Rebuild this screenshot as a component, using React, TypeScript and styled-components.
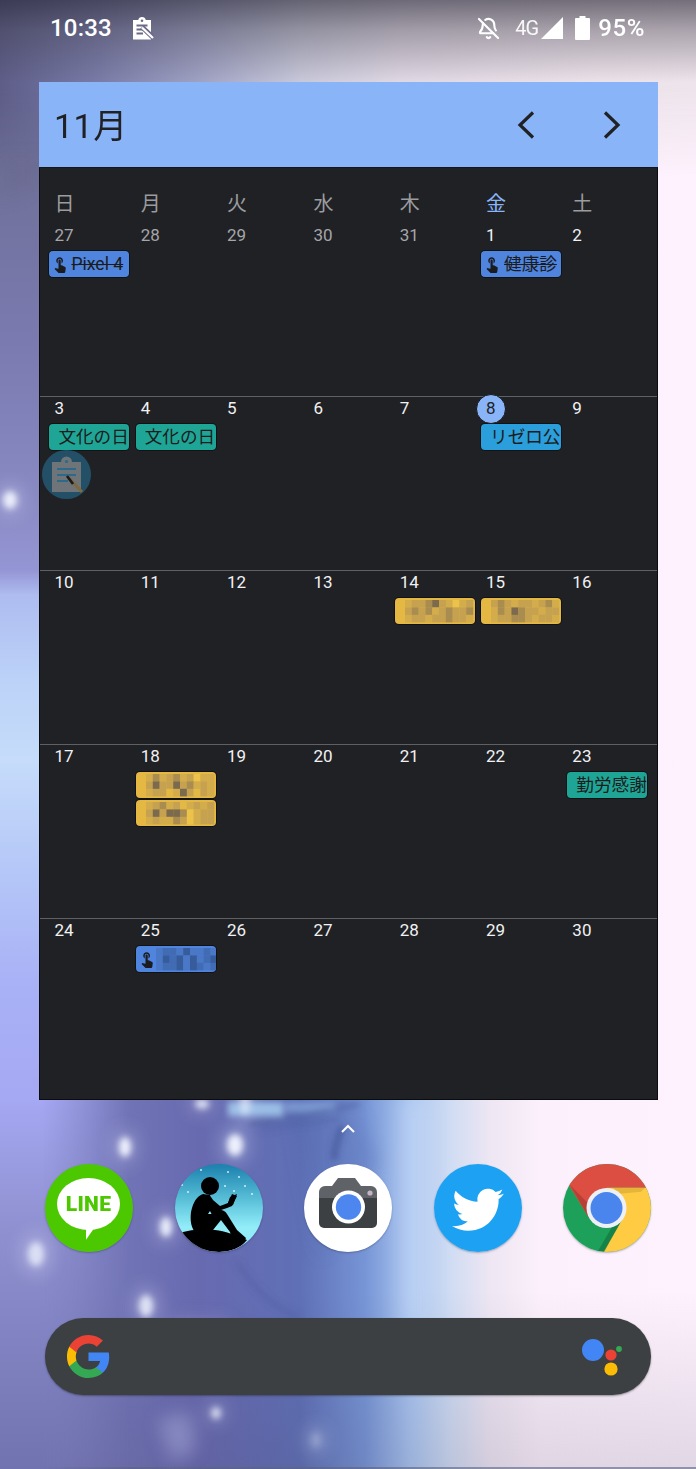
import React from "react";
import styled, { createGlobalStyle } from "styled-components";
import { BellOff } from "lucide-react";

const Global = createGlobalStyle`
  html, body { margin: 0; padding: 0; background: #000; }
  #root { width: 696px; height: 1469px; }
`;

const Screen = styled.div`
  position: relative;
  isolation: isolate;
  width: 696px;
  height: 1469px;
  overflow: hidden;
  display: flex;
  flex-direction: column;
  font-family: Roboto, "Noto Sans CJK JP", sans-serif;
  background:
    linear-gradient(180deg, rgba(0,0,0,0) 1290px, rgba(60,50,80,.14) 1469px),
    linear-gradient(90deg, #8a8bc8 0, #7477b8 100px, #686ab0 200px, #5f70b6 300px, #7795d6 365px, #a9c5f0 410px, #cfdcf3 450px, #eee6f3 490px, #fbf0fb 540px, #fdf2fd 696px);
  box-shadow: inset 1px 1px 0 rgba(40,40,55,.85), inset 0 -2px 0 rgba(90,100,130,.6);
  &::before {
    content: "";
    position: absolute;
    inset: 0;
    z-index: -3;
    background: linear-gradient(180deg, #5c5d88 0, #6f7098 160px, #7a7ab0 340px, #8a8ac4 500px, #9495d4 570px, #aebcf0 595px, #bcd2f8 680px, #c6dcfa 760px, #b6c9f8 860px, #a9b2f6 980px, #a5a8f2 1100px, #8f90d0 1230px, #7173b0 1469px);
    -webkit-mask-image: linear-gradient(90deg, #000 40px, transparent 130px);
    mask-image: linear-gradient(90deg, #000 40px, transparent 130px);
  }
  &::after {
    content: "";
    position: absolute;
    left: 0;
    top: 0;
    right: 0;
    height: 175px;
    z-index: -2;
    background:
      linear-gradient(180deg, rgba(40,38,52,.62) 0, rgba(60,58,70,.38) 30px, rgba(120,115,125,0) 82px),
      linear-gradient(90deg, #5d5d88 0, #7a7ca8 100px, #a0a2c4 200px, #c8c8da 300px, #e0d8e4 400px, #ece2ea 600px, #eee4ec 696px);
    -webkit-mask-image: linear-gradient(180deg, #000 90px, transparent 175px);
    mask-image: linear-gradient(180deg, #000 90px, transparent 175px);
  }
`;

const WallpaperArt = styled.svg`
  position: absolute;
  left: 0;
  top: 0;
  width: 696px;
  height: 1469px;
  z-index: -1;
`;

const StatusBar = styled.div`
  height: 56px;
  box-sizing: border-box;
  padding: 0 51px 0 50px;
  display: flex;
  align-items: center;
  color: #fff;
  font-weight: 500;
`;
const Clock = styled.span`
  font-size: 24px;
  letter-spacing: 0.2px;
`;
const NotifyIcon = styled.svg`
  width: 24px;
  height: 25px;
  margin-left: 18px;
`;
const StatusRight = styled.div`
  margin-left: auto;
  display: flex;
  align-items: center;
`;
const NetLabel = styled.span`
  font-size: 20px;
  font-weight: 400;
  margin: 0 3px 0 15px;
  opacity: 0.92;
  letter-spacing: -1px;
`;
const Percent = styled.span`
  font-size: 24px;
  margin-left: 8px;
  letter-spacing: 0.6px;
`;
const BatteryIcon = styled.svg`
  width: 15px;
  height: 24px;
  margin-left: 12px;
`;

const Widget = styled.section`
  margin: 26px 0 0 39px;
  width: 619px;
  height: 1018px;
  display: flex;
  flex-direction: column;
`;
const Header = styled.header`
  height: 86px;
  flex: none;
  background: #8ab4f8;
  box-sizing: border-box;
  border-bottom: 1px solid #15161a;
  display: flex;
  align-items: center;
  padding: 0 37px 0 15px;
  color: #202124;
`;
const Month = styled.h1`
  margin: 3px 0 0;
  font-size: 34px;
  line-height: 82px;
  font-weight: 400;
  flex: 1;
  letter-spacing: 0.5px;
`;
const NavButton = styled.svg`
  width: 18px;
  height: 28px;
  margin-left: 68px;
`;
const Body = styled.div`
  flex: 1;
  background: #202125;
  border: 1px solid #0b0c0e;
  border-top: 0;
  display: flex;
  flex-direction: column;
`;
const DaysRow = styled.div`
  display: grid;
  grid-template-columns: repeat(7, 86.33px);
  padding: 23px 6.4px 0;
  height: 55px;
  box-sizing: border-box;
`;
const DayName = styled.span<{ $today?: boolean }>`
  font-size: 20px;
  line-height: 24px;
  padding-left: 8px;
  color: ${(p) => (p.$today ? "#8ab4f8" : "#9b9c9f")};
  font-family: "Noto Sans CJK JP", sans-serif;
`;
const Week = styled.div<{ $h: number; $first?: boolean }>`
  height: ${(p) => p.$h}px;
  box-sizing: border-box;
  flex: none;
  display: grid;
  grid-template-columns: repeat(7, 86.33px);
  padding: ${(p) => (p.$first ? "1px" : "0")} 6.4px 0;
  border-top: ${(p) => (p.$first ? "0" : "1px solid #5f6064")};
`;
const Cell = styled.div`
  display: flex;
  flex-direction: column;
  align-items: flex-start;
  gap: 2px;
  min-width: 0;
`;
const DayNumber = styled.span<{ $muted?: boolean; $today?: boolean }>`
  position: relative;
  height: 25px;
  line-height: 22px;
  padding-left: 8px;
  font-size: 17px;
  color: ${(p) => (p.$today ? "#202124" : p.$muted ? "#a5a6a9" : "#f1f1f2")};
  z-index: 0;
  &::before {
    content: "";
    display: ${(p) => (p.$today ? "block" : "none")};
    position: absolute;
    z-index: -1;
    left: -2.5px;
    top: -3.5px;
    width: 28px;
    height: 28px;
    border-radius: 50%;
    background: #8ab4f8;
    border: 1px solid #16171a;
    box-sizing: content-box;
  }
`;
const Chip = styled.div<{ $bg: string }>`
  width: 80px;
  height: 26px;
  flex: none;
  margin-left: 3px;
  box-sizing: border-box;
  background: ${(p) => p.$bg};
  border-radius: 4px;
  box-shadow: 0 0 0 1px #111214;
  display: flex;
  align-items: center;
  overflow: hidden;
  white-space: nowrap;
  color: #1b1c20;
  font-size: 17.6px;
  line-height: 26px;
`;
const ChipText = styled.span<{ $strike?: boolean; $pad: number }>`
  padding-left: ${(p) => p.$pad}px;
  text-decoration: ${(p) => (p.$strike ? "line-through" : "none")};
  text-decoration-thickness: 1px;
  flex: none;
`;
const Touch = styled.svg`
  width: 18px;
  height: 18px;
  flex: none;
  margin-left: 2px;
`;
const Bubble = styled.div`
  position: absolute;
  left: 42px;
  top: 450px;
  width: 49px;
  height: 49px;
  border-radius: 50%;
  background: rgba(36, 88, 115, 0.85);
  display: flex;
  align-items: center;
  justify-content: center;
`;
const Handle = styled.svg`
  display: block;
  margin: 22px auto 0;
  width: 16px;
  height: 12px;
`;
const Dock = styled.div`
  margin: 30px 45px 0 45px;
  display: flex;
  justify-content: space-between;
`;
const AppIcon = styled.div<{ $bg: string }>`
  width: 88px;
  height: 88px;
  border-radius: 50%;
  overflow: hidden;
  position: relative;
  background: ${(p) => p.$bg};
  svg { display: block; width: 88px; height: 88px; }
`;
const AppShadow = styled.div`
  border-radius: 50%;
  box-shadow: 0 1px 2px rgba(40, 40, 60, 0.35);
`;
const LineBubble = styled.div`
  position: absolute;
  left: 12px;
  top: 14px;
  width: 63px;
  height: 52px;
  border-radius: 50%;
  background: #fff;
  color: #4cc800;
  text-align: center;
  font: 900 21px/52px Roboto, "Liberation Sans", sans-serif;
  letter-spacing: 0.3px;
  &::after {
    content: "";
    position: absolute;
    left: 29px;
    top: 47px;
    width: 0;
    height: 0;
    border-style: solid;
    border-width: 0 0 11px 13px;
    border-color: transparent transparent transparent #fff;
    transform: skewY(-30deg);
  }
`;
const SearchBar = styled.div`
  margin: 66px 45px 0 45px;
  height: 77px;
  border-radius: 39px;
  background: #3c4043;
  box-shadow: 0 1px 2px rgba(30, 30, 40, 0.45);
  display: flex;
  align-items: center;
  justify-content: space-between;
  padding: 0 26px 0 20px;
`;
const GoogleLogo = styled.svg`
  width: 47px;
  height: 47px;
`;
const AssistantLogo = styled.svg`
  width: 46px;
  height: 46px;
`;

const hand = "M9 11.24V7.5C9 6.12 10.12 5 11.5 5S14 6.12 14 7.5v3.74c1.21-.81 2-2.18 2-3.74C16 5.01 13.99 3 11.5 3S7 5.01 7 7.5c0 1.56.79 2.93 2 3.74zm9.84 4.63l-4.54-2.26c-.17-.07-.35-.11-.54-.11H13v-6c0-.83-.67-1.5-1.5-1.5S10 6.67 10 7.5v10.74l-3.43-.72c-.08-.01-.15-.03-.24-.03-.31 0-.59.13-.79.33l-.79.8 4.94 4.94c.27.27.65.44 1.06.44h6.79c.75 0 1.33-.55 1.44-1.28l.75-5.27c.01-.07.02-.14.02-.2 0-.62-.38-1.16-.91-1.38z";

const palette: Record<string, string> = {
  y: "#e2b846", l: "#d3ac4c", m: "#c6a250", d: "#a88c50", D: "#7b6a4d", v: "#ecc24a",
  b: "#5085df", c: "#4a78c6", e: "#416bb3", f: "#375c9b", g: "#2f4f86",
};
const Mosaic: React.FC<{ rows: string[]; w?: number; h?: number; x?: number }> = ({ rows, w = 6.8, h = 7.4, x = 0 }) => (
  <svg width={70} height={24} style={{ flex: "none", marginLeft: x }}>
    {rows.map((r, j) =>
      r.split("").map((c, i) => (c === "." ? null : <rect key={`${i}-${j}`} x={i * w} y={j * h + 1} width={w + 0.2} height={h + 0.2} fill={palette[c]} />))
    )}
  </svg>
);

type Ev = { label?: string; bg: string; touch?: boolean; strike?: boolean; pad?: number; mosaic?: string[]; mx?: number };
const BLUE = "#5085df", TEAL = "#1fa595", SKY = "#2a9fdb", GOLD = "#e4b843";
const events: Record<string, Ev[]> = {
  "0-0": [{ label: "Pixel 4", bg: BLUE, touch: true, strike: true, pad: 2 }],
  "0-5": [{ label: "健康診", bg: BLUE, touch: true, strike: true, pad: 3 }],
  "1-0": [{ label: "文化の日", bg: TEAL, pad: 9 }],
  "1-1": [{ label: "文化の日", bg: TEAL, pad: 9 }],
  "1-5": [{ label: "リゼロ公", bg: SKY, pad: 9 }],
  "2-4": [{ bg: GOLD, mx: 10, mosaic: ["lmmdDmlvlm", "mdmdlmdmmd", "lmmlmmdmml"] }],
  "2-5": [{ bg: GOLD, mx: 10, mosaic: ["mdmlmmlmdl", "ldmDdmmlmm", "lmmddmlmml"] }],
  "3-1": [
    { bg: GOLD, mx: 10, mosaic: ["ldlmdlmvll", "mDmmDmdlml", "lmmylDmyml"] },
    { bg: GOLD, mx: 10, mosaic: ["lmdlmylmlm", "mDmDDdvlmm", "lmlldmvlmm"] },
  ],
  "4-1": [{ bg: BLUE, touch: true, mx: 0, mosaic: ["ceecfccece", "cfefcfcefe", "ceefcfecee"] }],
  "3-6": [{ label: "勤労感謝", bg: TEAL, pad: 9 }],
};
const weeks = [[27, 28, 29, 30, 31, 1, 2], [3, 4, 5, 6, 7, 8, 9], [10, 11, 12, 13, 14, 15, 16], [17, 18, 19, 20, 21, 22, 23], [24, 25, 26, 27, 28, 29, 30]];
const heights = [173, 174, 174, 174, 181];
const dayNames = ["日", "月", "火", "水", "木", "金", "土"];

const bokeh: [number, number, number, number, number][] = [
  [125, 1147, 6, 10, 0.95], [235, 1145, 8, 11, 0.95], [166, 1227, 6, 10, 0.9], [36, 1254, 8, 12, 0.7],
  [146, 1306, 7, 11, 0.8], [216, 1413, 5, 6, 0.75], [202, 1104, 7, 5, 0.8], [10, 500, 7, 9, 0.9],
  [316, 1440, 5, 8, 0.2], [245, 1102, 5, 14, 0.55],
];

export default function App() {
  return (
    <Screen>
      <Global />
      <WallpaperArt viewBox="0 0 696 1469">
        <defs>
          <filter id="soft" x="-50%" y="-50%" width="200%" height="200%"><feGaussianBlur stdDeviation="3" /></filter>
          <filter id="softer" x="-50%" y="-50%" width="200%" height="200%"><feGaussianBlur stdDeviation="9" /></filter>
        </defs>
        <g filter="url(#softer)" opacity="0.8">
          <path d="M0 160h42v20L0 200z" fill="#67688c" opacity=".6" />
          <path d="M158 1420L190 1412L196 1450L172 1462z" fill="#aeb0de" opacity=".6" />
          <rect x="168" y="1320" width="60" height="60" fill="#9fa2d6" opacity=".5" />
          <rect x="398" y="1100" width="30" height="230" fill="#dbe4fa" opacity=".35" />
          <path d="M290 1100h60l30 60-60 100z" fill="#5060aa" opacity=".35" />
          {bokeh.map(([x, y, rx, ry], i) => (
            <ellipse key={i} cx={x} cy={y} rx={rx * 1.8} ry={ry * 1.7} fill="#e6ecff" opacity=".4" />
          ))}
        </g>
        <g filter="url(#soft)">
          <rect x="228" y="1102" width="55" height="14" fill="#a9d2f2" opacity=".8" />
          <rect x="285" y="1102" width="50" height="10" fill="#8fb4e4" opacity=".6" />
          <path d="M250 1124L360 1104" stroke="#4a5a9a" strokeWidth="4" opacity=".6" />
          <path d="M262 1130L340 1118" stroke="#4a5a9a" strokeWidth="3" opacity=".5" />
          <path d="M334 1160c0-12 4-22 8-34" stroke="#3f5192" strokeWidth="6" fill="none" opacity=".7" />
          <path d="M237 1262c14 22 30 42 62 56" stroke="#4f5a9c" strokeWidth="3" fill="none" opacity=".7" />
          {bokeh.map(([x, y, rx, ry, a], i) => (
            <ellipse key={i} cx={x} cy={y} rx={rx} ry={ry} fill="#f2f6ff" opacity={a} />
          ))}
        </g>
      </WallpaperArt>
      <StatusBar>
        <Clock>10:33</Clock>
        <NotifyIcon viewBox="0 0 24 25">
          <path d="M3 4h5.2a3.9 3.9 0 0 1 7.6 0H21v19.4H3z" fill="#fff" />
          <circle cx="12" cy="4.8" r="1.3" fill="#6a6a88" />
          <path d="M6.5 9.5h11M6.5 13.5h7M6.5 17.5h6.5" stroke="#6a6a88" strokeWidth="2" />
          <path d="M12 11l11 10.5" stroke="#6a6a88" strokeWidth="5" />
          <path d="M12 11.5l11 10.5" stroke="#fff" strokeWidth="2.4" />
        </NotifyIcon>
        <StatusRight>
          <BellOff size={23} color="#fff" strokeWidth={2.2} />
          <NetLabel>4G</NetLabel>
          <svg width="22" height="22" viewBox="0 0 22 22"><path d="M22 0v22H0z" fill="#fff" /></svg>
          <BatteryIcon viewBox="0 0 15 24"><path d="M4.5 0h6v2H14a1 1 0 0 1 1 1v20a1 1 0 0 1-1 1H1a1 1 0 0 1-1-1V3a1 1 0 0 1 1-1h3.5z" fill="#fff" /></BatteryIcon>
          <Percent>95%</Percent>
        </StatusRight>
      </StatusBar>

      <Widget>
        <Header>
          <Month>11月</Month>
          <NavButton viewBox="0 0 18 28"><path d="M16 1.5L3 14l13 12.5" fill="none" stroke="#202124" strokeWidth="3.2" /></NavButton>
          <NavButton viewBox="0 0 18 28"><path d="M2 1.5L15 14 2 26.5" fill="none" stroke="#202124" strokeWidth="3.2" /></NavButton>
        </Header>
        <Body>
          <DaysRow>
            {dayNames.map((d, i) => <DayName key={d} $today={i === 5}>{d}</DayName>)}
          </DaysRow>
          {weeks.map((w, wi) => (
            <Week key={wi} $h={heights[wi]} $first={wi === 0}>
              {w.map((d, di) => (
                <Cell key={di}>
                  <DayNumber $muted={wi === 0 && di < 5} $today={wi === 1 && di === 5}>{d}</DayNumber>
                  {(events[`${wi}-${di}`] || []).map((e, k) => (
                    <Chip key={k} $bg={e.bg}>
                      {e.touch && <Touch viewBox="0 0 24 24"><path d={hand} fill="#1b1c20" /></Touch>}
                      {e.label && <ChipText $strike={e.strike} $pad={e.pad ?? 0}>{e.label}</ChipText>}
                      {e.mosaic && <Mosaic rows={e.mosaic} x={e.mx ?? 0} />}
                    </Chip>
                  ))}
                </Cell>
              ))}
            </Week>
          ))}
        </Body>
      </Widget>

      <Bubble>
        <svg width="34" height="38" viewBox="0 0 34 38">
          <path d="M2 6h9a5.5 5.5 0 0 1 11 0h9v30H2z" fill="#6f7478" />
          <circle cx="16.5" cy="5.5" r="1.6" fill="#2b6a8a" />
          <path d="M7 13h19M7 19h19M7 25h11" stroke="#2b6a8a" strokeWidth="2.2" />
          <path d="M17 20l15 16" stroke="#7d6a3f" strokeWidth="3" />
          <path d="M17 20l6 8" stroke="#1a1b1e" strokeWidth="2.6" />
        </svg>
      </Bubble>

      <Handle viewBox="0 0 16 12"><path d="M2 10l6-6 6 6" fill="none" stroke="#fff" strokeWidth="2" /></Handle>

      <Dock>
        <AppShadow><AppIcon $bg="#4cc800"><LineBubble>LINE</LineBubble></AppIcon></AppShadow>
        <AppShadow><AppIcon $bg="linear-gradient(180deg,#1a80ad 0,#5cc2da 42%,#93edf9 72%,#8fe8f6 100%)">
          <svg viewBox="0 0 88 88">
            {[[26,6],[53,8],[64,13],[70,22],[7,21],[50,22],[77,30],[13,28],[59,27]].map(([x, y], i) => <circle key={i} cx={x} cy={y} r="0.9" fill="#dff6ff" />)}
            <path d="M5 69C15 65 30 65 40 66C50 67 60 71 72 76C66 84 55 88 44 88C28 88 13 81 5 69Z" fill="#000" />
            <circle cx="35" cy="22" r="9" fill="#000" />
            <path d="M28 30C22 32 18 38 16 48C15 56 16 62 19 67L38 66L46 56L55 68L56 72L70 76L71 74L62 66L52 50C50 47 48 46 46 46L52 44L57 42L62 32L57 30L53 39L45 42L38 36C36 33 35 32 35 31Z" fill="#000" />
            <path d="M55 33L62 30L58 41L52 42z" fill="#000" />
            <path d="M33 50l2-3 1.5 3z" fill="#8fe8f6" />
          </svg>
        </AppIcon></AppShadow>
        <AppShadow><AppIcon $bg="#fff">
          <svg viewBox="0 0 88 88">
            <path d="M15 28a6 6 0 0 1 6-6h7l6-8h17l6 8h10a6 6 0 0 1 6 6v7H15z" fill="#5f6368" />
            <path d="M15 34h58v25a5 5 0 0 1-5 5H20a5 5 0 0 1-5-5z" fill="#3c4043" />
            <circle cx="44.5" cy="43" r="16.5" fill="#fff" />
            <circle cx="44.5" cy="43" r="12.7" fill="#4d86ee" />
            <circle cx="66" cy="29" r="2.6" fill="#c4b4c4" />
          </svg>
        </AppIcon></AppShadow>
        <AppShadow><AppIcon $bg="#1da1f2">
          <svg viewBox="-8.4 -9.2 40.8 40.8">
            <path fill="#fff" d="M23.953 4.57a10 10 0 01-2.825.775 4.958 4.958 0 002.163-2.723c-.951.555-2.005.959-3.127 1.184a4.92 4.92 0 00-8.384 4.482C7.69 8.095 4.067 6.13 1.64 3.162a4.822 4.822 0 00-.666 2.475c0 1.71.87 3.213 2.188 4.096a4.904 4.904 0 01-2.228-.616v.06a4.923 4.923 0 003.946 4.827 4.996 4.996 0 01-2.212.085 4.936 4.936 0 004.604 3.417 9.867 9.867 0 01-6.102 2.105c-.39 0-.779-.023-1.17-.067a13.995 13.995 0 007.557 2.209c9.053 0 13.998-7.496 13.998-13.985 0-.21 0-.42-.015-.63A9.935 9.935 0 0024 4.59z" />
          </svg>
        </AppIcon></AppShadow>
        <AppShadow><AppIcon $bg="#1da05a">
          <svg viewBox="0 0 88 88">
            <path d="M4 18L44 -10L92 23.7H44L26 54z" fill="#dc4e41" />
            <path d="M92 23.7L95 95H36L60 54L44 23.7z" fill="#ffcb43" />
            <path d="M82 23.7H50l6 6 22-2z" fill="#c9a02d" opacity=".5" />
            <path d="M7 21l19 33 6-8z" fill="#b03c32" opacity=".8" />
            <path d="M41 88l19-34-8 4-17 29z" fill="#147a43" opacity=".8" />
            <circle cx="43.5" cy="44" r="20" fill="#edf0f4" />
            <circle cx="43.5" cy="44" r="16" fill="#4a85ee" />
          </svg>
        </AppIcon></AppShadow>
      </Dock>

      <SearchBar>
        <GoogleLogo viewBox="0 0 48 48">
          <path fill="#4285f4" d="M45.12 24.5c0-1.56-.14-3.06-.4-4.5H24v8.51h11.84c-.51 2.75-2.06 5.08-4.39 6.64v5.52h7.11c4.16-3.83 6.56-9.47 6.56-16.17z" />
          <path fill="#34a853" d="M24 46c5.94 0 10.92-1.97 14.56-5.33l-7.11-5.52c-1.97 1.32-4.49 2.1-7.45 2.1-5.73 0-10.58-3.87-12.31-9.07H4.34v5.7C7.96 41.07 15.4 46 24 46z" />
          <path fill="#fbbc05" d="M11.69 28.18C11.25 26.86 11 25.45 11 24s.25-2.86.69-4.18v-5.7H4.34C2.85 17.09 2 20.45 2 24c0 3.55.85 6.91 2.34 9.88l7.35-5.7z" />
          <path fill="#ea4335" d="M24 10.75c3.23 0 6.13 1.11 8.41 3.29l6.31-6.31C34.91 4.18 29.93 2 24 2 15.4 2 7.96 6.93 4.34 14.12l7.35 5.7c1.73-5.2 6.58-9.07 12.31-9.07z" />
        </GoogleLogo>
        <AssistantLogo viewBox="0 0 46 46">
          <circle cx="14" cy="16" r="11" fill="#4285f4" />
          <circle cx="32" cy="21" r="5.6" fill="#ea4335" />
          <circle cx="32" cy="35" r="6.6" fill="#fbbc05" />
          <circle cx="40" cy="15" r="2.9" fill="#34a853" />
        </AssistantLogo>
      </SearchBar>
    </Screen>
  );
}
